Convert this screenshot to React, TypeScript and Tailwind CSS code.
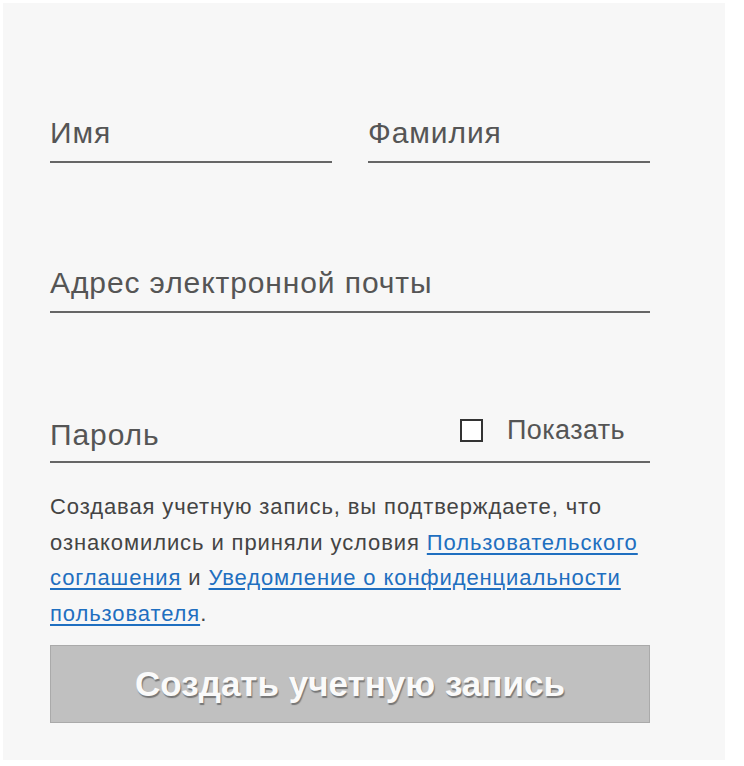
import { useState } from 'react';

const font = { fontFamily: '"Liberation Sans", Arial, sans-serif' };

function Field({ label, className = '' }: { label: string; className?: string }) {
  return (
    <div className={`border-b-2 border-[#666] ${className}`}>
      <div className="h-[46px] pt-[3px] text-[30px] leading-[30px] tracking-[0.9px] text-[#555]">{label}</div>
    </div>
  );
}

export default function App() {
  const [show, setShow] = useState(false);

  return (
    <div className="w-[744px] h-[766px] bg-white" style={font}>
      <div className="ml-[3px] mt-[3px] w-[722px] h-[757px] bg-[#f7f7f7] pl-[47px] pt-[112px]">
        <div className="w-[600px]">
          <div className="flex gap-[36px]">
            <Field label="Имя" className="flex-1" />
            <Field label="Фамилия" className="flex-1" />
          </div>

          <Field label="Адрес электронной почты" className="mt-[102px]" />

          <div className="mt-[102px] border-b-2 border-[#666] flex h-[48px] items-start">
            <div className="pt-[5px] text-[30px] leading-[30px] tracking-[0.9px] text-[#555] flex-1">Пароль</div>
            <label className="flex items-center gap-[24px] pr-[25px] cursor-pointer">
              <span
                onClick={() => setShow(!show)}
                className="w-[23px] h-[23px] border-2 border-[#333] bg-white"
              />
              <span className="text-[27px] leading-[30px] tracking-[0.4px] text-[#555]">Показать</span>
            </label>
          </div>

          <p className="mt-[26px] text-[22px] leading-[35.5px] tracking-[0.9px] text-[#444]">
            Создавая учетную запись, вы подтверждаете, что ознакомились и приняли условия{' '}
            <a href="#" className="text-[#1f6fc0] underline underline-offset-[3px]">Пользовательского соглашения</a> и{' '}
            <a href="#" className="text-[#1f6fc0] underline underline-offset-[3px]">Уведомление о конфиденциальности пользователя</a>.
          </p>

          <button
            type="button"
            className="mt-[14px] w-[600px] h-[78px] bg-[#c0c0c0] border border-[#aaa] text-[#fafafa] text-[35px] font-bold"
            style={{ textShadow: '1px 2px 1px #777' }}
          >
            Создать учетную запись
          </button>
        </div>
      </div>
    </div>
  );
}
